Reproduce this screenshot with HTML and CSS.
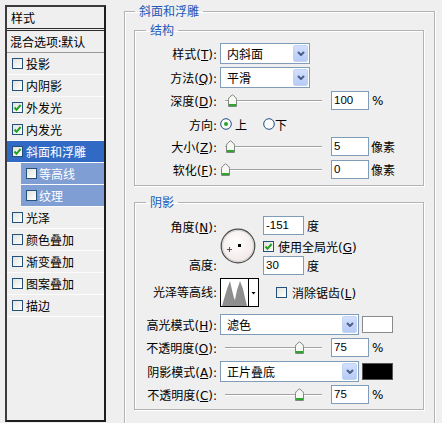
FILE: index.html
```html
<!DOCTYPE html>
<html lang="zh-CN">
<head>
<meta charset="utf-8">
<title>斜面和浮雕</title>
<link rel="stylesheet" href="styles.css">
</head>
<body>
<div class="dialog">
  <div class="style-list">
    <div class="list-head">样式</div>
    <div class="list-blend">混合选项:默认</div>
    <div class="row"><span class="cb"></span>投影</div>
    <div class="row"><span class="cb"></span>内阴影</div>
    <div class="row"><span class="cb"><svg viewBox="0 0 11 11" width="11" height="11"><path d="M2.5 5.5 L4.5 7.8 L8.6 3" stroke="#21a121" stroke-width="2" fill="none"/></svg></span>外发光</div>
    <div class="row"><span class="cb"><svg viewBox="0 0 11 11" width="11" height="11"><path d="M2.5 5.5 L4.5 7.8 L8.6 3" stroke="#21a121" stroke-width="2" fill="none"/></svg></span>内发光</div>
    <div class="row sel"><span class="cb"><svg viewBox="0 0 11 11" width="11" height="11"><path d="M2.5 5.5 L4.5 7.8 L8.6 3" stroke="#21a121" stroke-width="2" fill="none"/></svg></span>斜面和浮雕</div>
    <div class="row sub"><span class="cb"></span>等高线</div>
    <div class="row sub"><span class="cb"></span>纹理</div>
    <div class="row"><span class="cb"></span>光泽</div>
    <div class="row"><span class="cb"></span>颜色叠加</div>
    <div class="row"><span class="cb"></span>渐变叠加</div>
    <div class="row"><span class="cb"></span>图案叠加</div>
    <div class="row"><span class="cb"></span>描边</div>
  </div>

  <fieldset class="group outer">
    <legend>斜面和浮雕</legend>

    <fieldset class="group inner struct">
      <legend>结构</legend>
      <div class="frow r-sel">
        <span class="lbl">样式(<u>T</u>):</span>
        <div class="select w90"><span>内斜面</span><span class="dd"><svg width="8" height="5" viewBox="0 0 8 5"><path d="M1 1 L4 4 L7 1" stroke="#4a5f8a" stroke-width="2" fill="none"/></svg></span></div>
      </div>
      <div class="frow r-sel r-gap">
        <span class="lbl">方法(<u>Q</u>):</span>
        <div class="select w90"><span>平滑</span><span class="dd"><svg width="8" height="5" viewBox="0 0 8 5"><path d="M1 1 L4 4 L7 1" stroke="#4a5f8a" stroke-width="2" fill="none"/></svg></span></div>
      </div>
      <div class="frow r-num r-gap">
        <span class="lbl">深度(<u>D</u>):</span>
        <div class="slider"><div class="track"></div><span class="thumb" style="left:7px"><svg width="11" height="13" viewBox="0 0 11 13"><path d="M1.5 12.5 V5.5 Q1.5 3.8 3 2.8 L5.5 0.8 L8 2.8 Q9.5 3.8 9.5 5.5 V12.5 Z" fill="#f7f7f4" stroke="#7d8a7d"/><rect x="2" y="10" width="7" height="2" fill="#2fa52f"/></svg></span></div>
        <span class="num w38">100</span><span class="unit">%</span>
      </div>
      <div class="frow r-dir r-gap">
        <span class="lbl">方向:</span>
        <span class="radio"><svg width="12" height="12" viewBox="0 0 12 12"><circle cx="6" cy="6" r="5.3" fill="#fafafa" stroke="#23507d"/><circle cx="6" cy="6" r="2" fill="#28a228"/></svg></span><span class="rtext">上</span>
        <span class="radio second"><svg width="12" height="12" viewBox="0 0 12 12"><circle cx="6" cy="6" r="5.3" fill="#fafafa" stroke="#23507d"/></svg></span><span>下</span>
      </div>
      <div class="frow r-num r-gap2">
        <span class="lbl">大小(<u>Z</u>):</span>
        <div class="slider"><div class="track"></div><span class="thumb" style="left:5px"><svg width="11" height="13" viewBox="0 0 11 13"><path d="M1.5 12.5 V5.5 Q1.5 3.8 3 2.8 L5.5 0.8 L8 2.8 Q9.5 3.8 9.5 5.5 V12.5 Z" fill="#f7f7f4" stroke="#7d8a7d"/><rect x="2" y="10" width="7" height="2" fill="#2fa52f"/></svg></span></div>
        <span class="num w38">5</span><span class="unit u2">像素</span>
      </div>
      <div class="frow r-num r-gap3">
        <span class="lbl">软化(<u>F</u>):</span>
        <div class="slider"><div class="track"></div><span class="thumb" style="left:0px"><svg width="11" height="13" viewBox="0 0 11 13"><path d="M1.5 12.5 V5.5 Q1.5 3.8 3 2.8 L5.5 0.8 L8 2.8 Q9.5 3.8 9.5 5.5 V12.5 Z" fill="#f7f7f4" stroke="#7d8a7d"/><rect x="2" y="10" width="7" height="2" fill="#2fa52f"/></svg></span></div>
        <span class="num w38">0</span><span class="unit u2">像素</span>
      </div>
    </fieldset>

    <fieldset class="group inner shade">
      <legend>阴影</legend>
      <div class="angle-grid">
        <span class="lbl g1">角度(<u>N</u>):</span>
        <div class="dial"><svg width="36" height="36" viewBox="0 0 36 36"><defs><radialGradient id="dg" cx="45%" cy="40%" r="65%"><stop offset="0" stop-color="#ffffff"/><stop offset="1" stop-color="#efe6e4"/></radialGradient></defs><circle cx="18" cy="18" r="16.8" fill="url(#dg)" stroke="#4a4a4a" stroke-width="1.2"/><circle cx="18" cy="18" r="15.6" fill="none" stroke="#c8c8c8" stroke-width="0.8"/><rect x="18" y="16" width="3" height="3" fill="#000"/><path d="M7 21.5h5M9.5 19v5" stroke="#555" stroke-width="1"/></svg></div>
        <div class="ctl g1"><span class="num w41">-151</span><span class="unit">度</span></div>
        <div class="ctl g2"><span class="cb"><svg viewBox="0 0 11 11" width="11" height="11"><path d="M2.5 5.5 L4.5 7.8 L8.6 3" stroke="#21a121" stroke-width="2" fill="none"/></svg></span><span class="cbtext">使用全局光(<u>G</u>)</span></div>
        <span class="lbl g3">高度:</span>
        <div class="ctl g3"><span class="num w41">30</span><span class="unit">度</span></div>
      </div>
      <div class="frow r-contour">
        <span class="lbl">光泽等高线:</span>
        <span class="contour"><svg width="39" height="29" viewBox="0 0 39 29"><rect x="0.5" y="0.5" width="38" height="28" fill="#fff" stroke="#000"/><polygon points="2,28 4,21 7,11 10,3 12,12 14,20 15,22 17,12 20,3 23,11 25,20 27,28" fill="#8e8e8e"/><line x1="28.5" y1="0" x2="28.5" y2="29" stroke="#000"/><path d="M31.5 14h4l-2 2.5z" fill="#000"/></svg></span>
        <span class="cb aa"></span><span class="cbtext2">消除锯齿(<u>L</u>)</span>
      </div>
      <div class="frow r-sel r-mode">
        <span class="lbl">高光模式(<u>H</u>):</span>
        <div class="select w139"><span>滤色</span><span class="dd"><svg width="8" height="5" viewBox="0 0 8 5"><path d="M1 1 L4 4 L7 1" stroke="#4a5f8a" stroke-width="2" fill="none"/></svg></span></div>
        <span class="swatch white"></span>
      </div>
      <div class="frow r-num r-gap">
        <span class="lbl">不透明度(<u>O</u>):</span>
        <div class="slider"><div class="track"></div><span class="thumb" style="left:74px"><svg width="11" height="13" viewBox="0 0 11 13"><path d="M1.5 12.5 V5.5 Q1.5 3.8 3 2.8 L5.5 0.8 L8 2.8 Q9.5 3.8 9.5 5.5 V12.5 Z" fill="#f7f7f4" stroke="#7d8a7d"/><rect x="2" y="10" width="7" height="2" fill="#2fa52f"/></svg></span></div>
        <span class="num w38">75</span><span class="unit">%</span>
      </div>
      <div class="frow r-sel r-gap4">
        <span class="lbl">阴影模式(<u>A</u>):</span>
        <div class="select w139"><span>正片叠底</span><span class="dd"><svg width="8" height="5" viewBox="0 0 8 5"><path d="M1 1 L4 4 L7 1" stroke="#4a5f8a" stroke-width="2" fill="none"/></svg></span></div>
        <span class="swatch black"></span>
      </div>
      <div class="frow r-num r-gap">
        <span class="lbl">不透明度(<u>C</u>):</span>
        <div class="slider"><div class="track"></div><span class="thumb" style="left:74px"><svg width="11" height="13" viewBox="0 0 11 13"><path d="M1.5 12.5 V5.5 Q1.5 3.8 3 2.8 L5.5 0.8 L8 2.8 Q9.5 3.8 9.5 5.5 V12.5 Z" fill="#f7f7f4" stroke="#7d8a7d"/><rect x="2" y="10" width="7" height="2" fill="#2fa52f"/></svg></span></div>
        <span class="num w38">75</span><span class="unit">%</span>
      </div>
    </fieldset>
  </fieldset>
</div>
</body>
</html>
```

FILE: styles.css
```css
html, body {
  margin: 0;
  padding: 0;
}
html {
  background: #efefef;
  overflow: hidden;
}
body {
  width: 442px;
  height: 423px;
  overflow: hidden;
  background: #efefef;
  color: #000;
  font-family: "DejaVu Sans", "Noto Sans CJK SC", sans-serif;
  font-size: 12px;
}
u { text-decoration: underline; text-underline-offset: 1px; }

.dialog {
  display: flex;
  align-items: flex-start;
  height: 423px;
  overflow: hidden;
}

/* ---------- left style list ---------- */
.style-list {
  margin: 5px 0 0 5px;
  width: 101px;
  height: 417px;
  box-sizing: border-box;
  border: 2px solid;
  border-color: #3c3c3c #1e1e1e #1e1e1e #3c3c3c;
  background: #efefef;
  font-family: "Noto Sans CJK SC", sans-serif;
}
.list-head {
  height: 21px;
  line-height: 21px;
  padding-left: 4px;
  border-bottom: 3px double #2a2a2a;
}
.list-blend {
  height: 21px;
  line-height: 21px;
  padding-left: 3px;
  border-bottom: 1px solid #9a9a9a;
}
.row {
  height: 21px;
  display: flex;
  align-items: center;
  padding-left: 5px;
  border-bottom: 1px solid #fbfbfb;
}
.row.sel {
  background: #316ac5;
  color: #fff;
}
.row.sub {
  margin-left: 14px;
  background: #7f9ed4;
  color: #fff;
}
.cb {
  flex: none;
  width: 11px;
  height: 11px;
  box-sizing: border-box;
  border: 1px solid #24507c;
  background: linear-gradient(135deg, #e2e2dc, #ffffff);
  margin-right: 3px;
  display: flex;
  align-items: center;
  justify-content: center;
}
.cb svg { display: block; flex: none; }
.row.sub .cb { margin-right: 2px; }

/* ---------- group boxes ---------- */
fieldset.group {
  margin: 0;
  min-width: 0;
  box-sizing: border-box;
  border: 1px solid #b3b3b3;
  box-shadow: inset 1px 1px 0 #ffffff, 1px 1px 0 #ffffff;
}
fieldset.group > legend {
  color: #2158b8;
  font-family: "Noto Sans CJK SC", sans-serif;
  font-size: 12px;
  line-height: 16px;
  height: 16px;
  padding: 0 4px;
}
.outer {
  margin: 3px 0 0 18px !important;
  width: 311px;
  padding: 3px 10px 13px 9px;
  border-bottom: none !important;
  box-shadow: inset 1px 1px 0 #ffffff, 1px 0 0 #ffffff !important;
}
.outer > legend { margin-left: 1px; }
.inner {
  width: 290px;
  padding: 5px 4px 6px 11px;
}
.shade {
  margin-top: 8px !important;
  padding-top: 6px;
  padding-bottom: 5px;
}

/* ---------- form rows ---------- */
.frow {
  display: flex;
  align-items: center;
  white-space: nowrap;
}
.lbl {
  flex: none;
  width: 71px;
  margin-right: 3px;
  text-align: right;
  white-space: nowrap;
  font-size: 12px;
}
.r-sel { height: 21px; }
.r-num { height: 19px; }
.r-dir { height: 22px; }
.r-gap { margin-top: 3px; }
.r-gap2 { margin-top: 2px; }
.r-gap3 { margin-top: 4px; }
.r-gap4 { margin-top: 4px; }

.select {
  flex: none;
  height: 21px;
  box-sizing: border-box;
  border: 1px solid #7f9db9;
  background: #fff;
  display: flex;
  align-items: center;
  justify-content: space-between;
  padding-left: 6px;
  font-family: "Noto Sans CJK SC", sans-serif;
}
.w90 { width: 90px; }
.w139 { width: 139px; }
.dd {
  flex: none;
  width: 15px;
  height: 17px;
  box-sizing: border-box;
  margin-right: 1px;
  border: 1px solid #c3d3f6;
  border-radius: 2px;
  background: linear-gradient(#d3e0fc, #b6cbf6);
  display: flex;
  align-items: center;
  justify-content: center;
}
.dd svg { display: block; }

.slider {
  flex: none;
  position: relative;
  width: 111px;
  height: 19px;
  display: flex;
  align-items: center;
}
.track {
  margin-left: 5px;
  width: 97px;
  height: 0;
  border-top: 1px solid #a2a2a2;
  border-bottom: 1px solid #ffffff;
}
.thumb {
  position: absolute;
  top: 3px;
  width: 11px;
  height: 13px;
}
.thumb svg { display: block; }

.num {
  flex: none;
  height: 19px;
  line-height: 17px;
  box-sizing: border-box;
  border: 1px solid #7f9db9;
  background: #fff;
  padding-left: 2px;
  font-family: "Liberation Sans", sans-serif;
  font-size: 11.5px;
}
.w38 { width: 38px; }
.w41 { width: 41px; }
.unit { margin-left: 3px; }
.unit.u2 { margin-left: 2px; }

.radio { flex: none; width: 12px; height: 12px; margin-right: 3px; }
.radio svg { display: block; }
.radio.second { margin-left: 16px; margin-right: 0; }

/* angle block */
.angle-grid {
  display: grid;
  grid-template-columns: 74px 43px 1fr;
  grid-template-rows: 20px 20px 19px;
  align-items: center;
}
.angle-grid .g1 { grid-row: 1; }
.angle-grid .g2 { grid-row: 2; grid-column: 3; }
.angle-grid .g3 { grid-row: 3; }
.angle-grid .lbl { grid-column: 1; align-self: center; }
.angle-grid .lbl.g3 { padding-bottom: 3px; }
.angle-grid .ctl { grid-column: 3; display: flex; align-items: center; height: 19px; }
.angle-grid .g1.ctl { align-self: start; }
.dial {
  grid-column: 2;
  grid-row: 1 / 4;
  align-self: start;
  margin-top: 12px;
  width: 36px;
  height: 36px;
}
.dial svg { display: block; }
.cbtext { margin-left: 1px; }

.r-contour { margin-top: 3px; height: 29px; }
.r-contour .lbl { padding-bottom: 3px; }
.contour { flex: none; width: 39px; height: 29px; }
.contour svg { display: block; }
.cb.aa { margin-left: 17px; margin-right: 5px; }

.r-mode { margin-top: 7px; }
.swatch {
  flex: none;
  margin-left: 3px;
  width: 31px;
  height: 17px;
  box-sizing: border-box;
}
.swatch.white { background: #fff; border: 1px solid #8a8a8a; }
.swatch.black { background: #000; border: 1px solid #555; }
```
